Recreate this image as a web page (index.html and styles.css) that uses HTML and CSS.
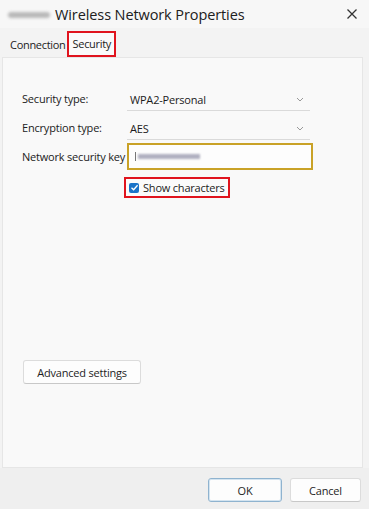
FILE: index.html
```html
<!DOCTYPE html>
<html>
<head>
<meta charset="utf-8">
<link rel="stylesheet" href="styles.css">
</head>
<body>
<div class="window">
  <div class="titlebar">
    <span class="blurname"></span>
    <span class="title">Wireless Network Properties</span>
    <span class="close">
      <svg width="12" height="12" viewBox="0 0 12 12"><path d="M1.5 1.5 L10.5 10.5 M10.5 1.5 L1.5 10.5" stroke="#333" stroke-width="1.3" fill="none"/></svg>
    </span>
  </div>
  <div class="tabs">
    <span class="tab">Connection</span>
    <span class="tab active">Security</span>
  </div>
  <div class="panel">
    <div class="row">
      <span class="label">Security type:</span>
      <div class="select"><span>WPA2-Personal</span><svg class="chev" width="8" height="5" viewBox="0 0 8 5"><path d="M1 1 L4 4 L7 1" stroke="#999" stroke-width="1" fill="none"/></svg></div>
    </div>
    <div class="row">
      <span class="label">Encryption type:</span>
      <div class="select"><span>AES</span><svg class="chev" width="8" height="5" viewBox="0 0 8 5"><path d="M1 1 L4 4 L7 1" stroke="#999" stroke-width="1" fill="none"/></svg></div>
    </div>
    <div class="row">
      <span class="label">Network security key</span>
      <div class="keybox"><span class="cursor"></span><span class="blurkey"></span></div>
    </div>
    <div class="checkrow">
      <label class="check">
        <span class="box"><svg width="9" height="9" viewBox="0 0 9 9"><path d="M1.5 4.8 L3.6 6.8 L7.6 2.2" stroke="#fff" stroke-width="1.3" fill="none"/></svg></span>
        <span>Show characters</span>
      </label>
    </div>
    <div class="spacer"></div>
    <div class="advrow"><button class="btn adv">Advanced settings</button></div>
  </div>
  <div class="footer">
    <button class="btn ok">OK</button>
    <button class="btn cancel">Cancel</button>
  </div>
</div>
</body>
</html>
```
FILE: styles.css
```css
html, body {
  margin: 0;
  padding: 0;
  background: #f2f2f2;
}
body {
  font-family: "Open Sans", "Noto Sans", sans-serif;
  color: #1b1b1b;
}
.window {
  width: 369px;
  height: 509px;
  display: flex;
  flex-direction: column;
  background: #f3f3f3;
  overflow: hidden;
}
.titlebar {
  height: 28px;
  display: flex;
  align-items: center;
  padding-left: 8px;
  background: #f7f7f7;
}
.blurname {
  width: 42px;
  height: 6px;
  background: #b9b9b9;
  border-radius: 3px;
  filter: blur(1.5px);
  margin-right: 5px;
  margin-top: 1px;
}
.title {
  font-size: 14.5px;
  letter-spacing: -0.1px;
  color: #202020;
}
.close {
  margin-left: auto;
  margin-right: 11px;
  display: flex;
}
.tabs {
  height: 29px;
  display: flex;
  align-items: flex-end;
  padding-left: 9px;
  font-size: 11px;
  letter-spacing: -0.3px;
}
.tab {
  padding: 0 2px 5px 1px;
  color: #222;
}
.tab.active {
  border: 2px solid #e0141e;
  padding: 3px 3px 4px 4px;
  margin-left: -1px;
  background: #fafafa;
}
.panel {
  margin: 0 6px 0 2px;
  height: 411px;
  background: #f9f9f9;
  border: 1px solid #e6e6e6;
  display: flex;
  flex-direction: column;
  padding-top: 26px;
  box-sizing: border-box;
}
.row {
  display: flex;
  align-items: center;
  height: 29px;
  font-size: 11px;
  letter-spacing: -0.2px;
}
.label {
  width: 105px;
  padding-left: 19px;
  color: #222;
}
.select {
  width: 183px;
  height: 22px;
  display: flex;
  align-items: center;
  justify-content: space-between;
  padding: 0 6px 0 3px;
  box-sizing: border-box;
  border-bottom: 1px solid #dadada;
  margin-top: 2px;
}
.chev { margin-top: 1px; }
.keybox {
  width: 186px;
  height: 27px;
  border: 2px solid #c9a227;
  box-sizing: border-box;
  background: #fdfdfd;
  display: flex;
  align-items: center;
  padding-left: 6px;
}
.cursor {
  width: 1px;
  height: 9px;
  background: #777;
  margin-right: 2px;
}
.blurkey {
  width: 62px;
  height: 5px;
  background: #b0b0c0;
  filter: blur(1.3px);
}
.checkrow {
  padding-left: 121px;
  margin-top: 4px;
}
.check {
  display: inline-flex;
  align-items: center;
  border: 2px solid #e0141e;
  height: 21px;
  box-sizing: border-box;
  padding: 0 3px 0 3px;
  font-size: 11px;
  letter-spacing: -0.2px;
  background: #fbfbfb;
}
.box {
  width: 10px;
  height: 10px;
  background: #1a73c8;
  border-radius: 2px;
  display: flex;
  align-items: center;
  justify-content: center;
  margin-right: 4px;
}
.spacer { flex: 1; }
.advrow {
  padding-left: 20px;
  padding-bottom: 83px;
}
.btn {
  font-family: "Open Sans", "Noto Sans", sans-serif;
  font-size: 11px;
  letter-spacing: -0.2px;
  color: #1e1e1e;
  background: #fdfdfd;
  border: 1px solid #dcdcdc;
  border-bottom-color: #c8c8c8;
  border-radius: 3px;
  padding: 0;
  height: 24px;
}
.adv {
  width: 118px;
}
.footer {
  flex: 1;
  background: #efefef;
  display: flex;
  align-items: flex-start;
  justify-content: flex-end;
  padding-top: 10px;
  padding-right: 8px;
  gap: 8px;
}
.ok {
  width: 74px;
  border-color: #8fb3cf;
  border-width: 1px;
  box-shadow: inset 0 0 0 1px #d4e4f0;
}
.cancel {
  width: 71px;
}
```
